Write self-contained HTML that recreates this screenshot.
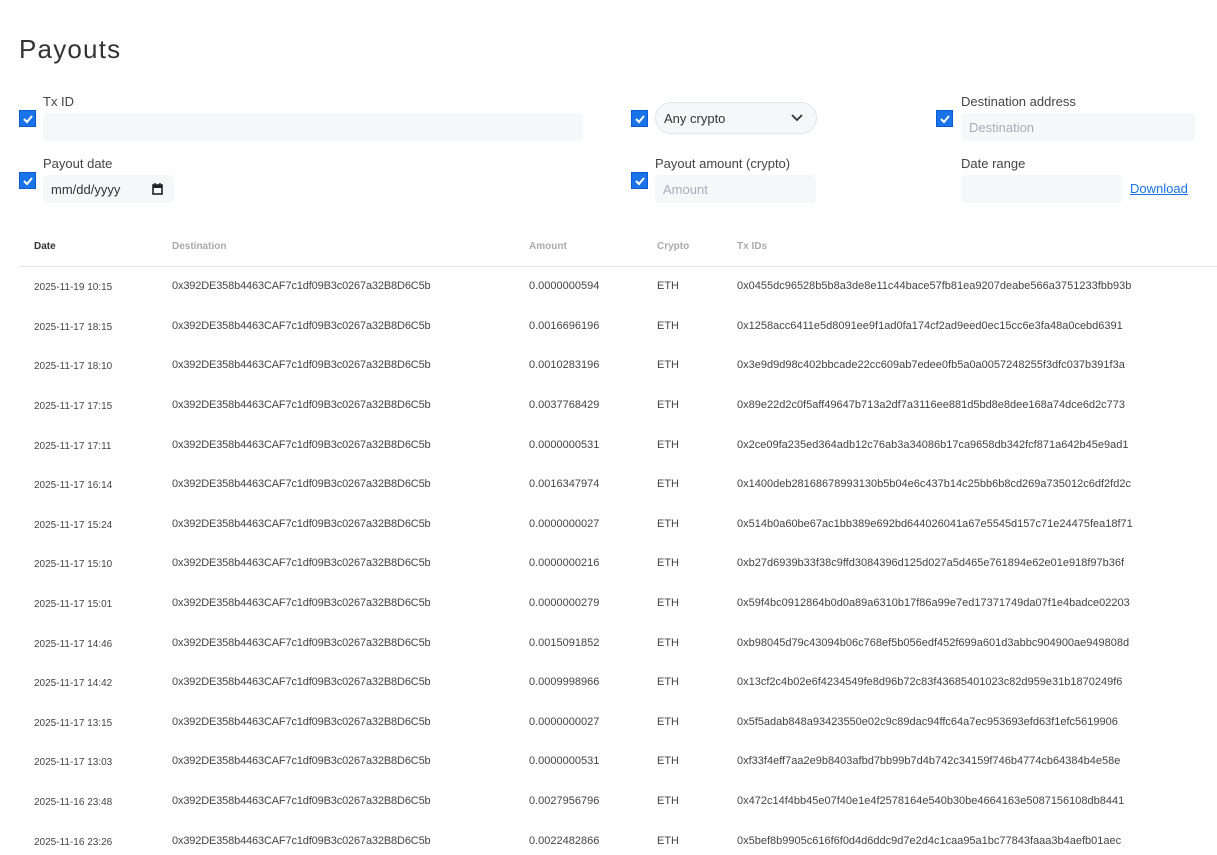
<!DOCTYPE html>
<html><head><meta charset="utf-8"><style>
*{margin:0;padding:0;box-sizing:border-box}
body{width:1217px;height:853px;overflow:hidden;background:#fff;font-family:"Liberation Sans",sans-serif;color:#333;position:relative}
.a{position:absolute}
h1{position:absolute;left:19px;top:34px;font-size:26px;font-weight:normal;color:#333;letter-spacing:1.2px}
.cb{position:absolute;width:17px;height:17px;background:#1a73e8;border:1px solid #0d5bd0}
.cb svg{position:absolute;left:2px;top:2px}
.lbl{position:absolute;font-size:13px;color:#444}
.inp{position:absolute;background:#f6f7f9;border-radius:4px;font-size:13px;color:#aab;padding-left:8px;display:flex;align-items:center}
.th{position:absolute;top:241px;font-size:10px;font-weight:bold;color:#aaa}
.row{position:absolute;left:0;width:1217px;height:20px;font-size:11px;color:#444}
.row span{position:absolute;top:0}
.row span:first-child{top:2px}
.row span:nth-child(2){letter-spacing:-0.15px}
</style></head><body>
<h1>Payouts</h1>

<div class="cb" style="left:19px;top:110px"><svg width="12" height="12" viewBox="0 0 12 12"><path d="M2 6l3 3 5-6" stroke="#fff" stroke-width="2" fill="none"/></svg></div>
<div class="lbl" style="left:43px;top:94px">Tx ID</div>
<div class="inp" style="left:43px;top:113px;width:540px;height:28px"></div>

<div class="cb" style="left:19px;top:172px"><svg width="12" height="12" viewBox="0 0 12 12"><path d="M2 6l3 3 5-6" stroke="#fff" stroke-width="2" fill="none"/></svg></div>
<div class="lbl" style="left:43px;top:156px">Payout date</div>
<div class="inp" style="left:43px;top:175px;width:131px;height:28px;color:#333;font-size:13px">mm/dd/yyyy<svg class="a" style="left:109px;top:7px" width="11" height="13" viewBox="0 0 11 13"><rect x="1" y="3" width="9" height="9" fill="none" stroke="#222" stroke-width="1.6"/><rect x="1" y="3" width="9" height="3" fill="#222"/><path d="M3 1v2M8 1v2" stroke="#222" stroke-width="1.5"/></svg></div>

<div class="cb" style="left:631px;top:110px"><svg width="12" height="12" viewBox="0 0 12 12"><path d="M2 6l3 3 5-6" stroke="#fff" stroke-width="2" fill="none"/></svg></div>
<div class="a" style="left:655px;top:102px;width:162px;height:32px;border:1px solid #e3e5e8;border-radius:16px;background:#f6f7f9;font-size:13px;color:#333;padding:8px 0 0 8px">Any crypto<svg class="a" style="left:135px;top:11px" width="12" height="8" viewBox="0 0 12 8"><path d="M1 1l5 5 5-5" stroke="#333" stroke-width="1.8" fill="none"/></svg></div>

<div class="cb" style="left:631px;top:172px"><svg width="12" height="12" viewBox="0 0 12 12"><path d="M2 6l3 3 5-6" stroke="#fff" stroke-width="2" fill="none"/></svg></div>
<div class="lbl" style="left:655px;top:156px">Payout amount (crypto)</div>
<div class="inp" style="left:655px;top:175px;width:161px;height:28px">Amount</div>

<div class="cb" style="left:936px;top:110px"><svg width="12" height="12" viewBox="0 0 12 12"><path d="M2 6l3 3 5-6" stroke="#fff" stroke-width="2" fill="none"/></svg></div>
<div class="lbl" style="left:961px;top:94px">Destination address</div>
<div class="inp" style="left:961px;top:113px;width:234px;height:28px">Destination</div>

<div class="lbl" style="left:961px;top:156px">Date range</div>
<div class="inp" style="left:961px;top:175px;width:161px;height:28px"></div>
<div class="a" style="left:1130px;top:181px;font-size:13px;color:#1a73e8;text-decoration:underline">Download</div>

<div class="th" style="left:34px;color:#333">Date</div>
<div class="th" style="left:172px">Destination</div>
<div class="th" style="left:529px">Amount</div>
<div class="th" style="left:657px">Crypto</div>
<div class="th" style="left:737px">Tx IDs</div>
<div class="a" style="left:19px;top:266px;width:1198px;height:1px;background:#e5e5e5"></div>

<div class="row" style="top:280px"><span style="left:34px;font-size:10px">2025-11-19 10:15</span><span style="left:172px">0x392DE358b4463CAF7c1df09B3c0267a32B8D6C5b</span><span style="left:529px">0.0000000594</span><span style="left:657px">ETH</span><span style="left:737px">0x0455dc96528b5b8a3de8e11c44bace57fb81ea9207deabe566a3751233fbb93b</span></div>
<div class="row" style="top:320px"><span style="left:34px;font-size:10px">2025-11-17 18:15</span><span style="left:172px">0x392DE358b4463CAF7c1df09B3c0267a32B8D6C5b</span><span style="left:529px">0.0016696196</span><span style="left:657px">ETH</span><span style="left:737px">0x1258acc6411e5d8091ee9f1ad0fa174cf2ad9eed0ec15cc6e3fa48a0cebd6391</span></div>
<div class="row" style="top:359px"><span style="left:34px;font-size:10px">2025-11-17 18:10</span><span style="left:172px">0x392DE358b4463CAF7c1df09B3c0267a32B8D6C5b</span><span style="left:529px">0.0010283196</span><span style="left:657px">ETH</span><span style="left:737px">0x3e9d9d98c402bbcade22cc609ab7edee0fb5a0a0057248255f3dfc037b391f3a</span></div>
<div class="row" style="top:399px"><span style="left:34px;font-size:10px">2025-11-17 17:15</span><span style="left:172px">0x392DE358b4463CAF7c1df09B3c0267a32B8D6C5b</span><span style="left:529px">0.0037768429</span><span style="left:657px">ETH</span><span style="left:737px">0x89e22d2c0f5aff49647b713a2df7a3116ee881d5bd8e8dee168a74dce6d2c773</span></div>
<div class="row" style="top:439px"><span style="left:34px;font-size:10px">2025-11-17 17:11</span><span style="left:172px">0x392DE358b4463CAF7c1df09B3c0267a32B8D6C5b</span><span style="left:529px">0.0000000531</span><span style="left:657px">ETH</span><span style="left:737px">0x2ce09fa235ed364adb12c76ab3a34086b17ca9658db342fcf871a642b45e9ad1</span></div>
<div class="row" style="top:478px"><span style="left:34px;font-size:10px">2025-11-17 16:14</span><span style="left:172px">0x392DE358b4463CAF7c1df09B3c0267a32B8D6C5b</span><span style="left:529px">0.0016347974</span><span style="left:657px">ETH</span><span style="left:737px">0x1400deb28168678993130b5b04e6c437b14c25bb6b8cd269a735012c6df2fd2c</span></div>
<div class="row" style="top:518px"><span style="left:34px;font-size:10px">2025-11-17 15:24</span><span style="left:172px">0x392DE358b4463CAF7c1df09B3c0267a32B8D6C5b</span><span style="left:529px">0.0000000027</span><span style="left:657px">ETH</span><span style="left:737px">0x514b0a60be67ac1bb389e692bd644026041a67e5545d157c71e24475fea18f71</span></div>
<div class="row" style="top:557px"><span style="left:34px;font-size:10px">2025-11-17 15:10</span><span style="left:172px">0x392DE358b4463CAF7c1df09B3c0267a32B8D6C5b</span><span style="left:529px">0.0000000216</span><span style="left:657px">ETH</span><span style="left:737px">0xb27d6939b33f38c9ffd3084396d125d027a5d465e761894e62e01e918f97b36f</span></div>
<div class="row" style="top:597px"><span style="left:34px;font-size:10px">2025-11-17 15:01</span><span style="left:172px">0x392DE358b4463CAF7c1df09B3c0267a32B8D6C5b</span><span style="left:529px">0.0000000279</span><span style="left:657px">ETH</span><span style="left:737px">0x59f4bc0912864b0d0a89a6310b17f86a99e7ed17371749da07f1e4badce02203</span></div>
<div class="row" style="top:637px"><span style="left:34px;font-size:10px">2025-11-17 14:46</span><span style="left:172px">0x392DE358b4463CAF7c1df09B3c0267a32B8D6C5b</span><span style="left:529px">0.0015091852</span><span style="left:657px">ETH</span><span style="left:737px">0xb98045d79c43094b06c768ef5b056edf452f699a601d3abbc904900ae949808d</span></div>
<div class="row" style="top:676px"><span style="left:34px;font-size:10px">2025-11-17 14:42</span><span style="left:172px">0x392DE358b4463CAF7c1df09B3c0267a32B8D6C5b</span><span style="left:529px">0.0009998966</span><span style="left:657px">ETH</span><span style="left:737px">0x13cf2c4b02e6f4234549fe8d96b72c83f43685401023c82d959e31b1870249f6</span></div>
<div class="row" style="top:716px"><span style="left:34px;font-size:10px">2025-11-17 13:15</span><span style="left:172px">0x392DE358b4463CAF7c1df09B3c0267a32B8D6C5b</span><span style="left:529px">0.0000000027</span><span style="left:657px">ETH</span><span style="left:737px">0x5f5adab848a93423550e02c9c89dac94ffc64a7ec953693efd63f1efc5619906</span></div>
<div class="row" style="top:755px"><span style="left:34px;font-size:10px">2025-11-17 13:03</span><span style="left:172px">0x392DE358b4463CAF7c1df09B3c0267a32B8D6C5b</span><span style="left:529px">0.0000000531</span><span style="left:657px">ETH</span><span style="left:737px">0xf33f4eff7aa2e9b8403afbd7bb99b7d4b742c34159f746b4774cb64384b4e58e</span></div>
<div class="row" style="top:795px"><span style="left:34px;font-size:10px">2025-11-16 23:48</span><span style="left:172px">0x392DE358b4463CAF7c1df09B3c0267a32B8D6C5b</span><span style="left:529px">0.0027956796</span><span style="left:657px">ETH</span><span style="left:737px">0x472c14f4bb45e07f40e1e4f2578164e540b30be4664163e5087156108db8441</span></div>
<div class="row" style="top:835px"><span style="left:34px;font-size:10px">2025-11-16 23:26</span><span style="left:172px">0x392DE358b4463CAF7c1df09B3c0267a32B8D6C5b</span><span style="left:529px">0.0022482866</span><span style="left:657px">ETH</span><span style="left:737px">0x5bef8b9905c616f6f0d4d6ddc9d7e2d4c1caa95a1bc77843faaa3b4aefb01aec</span></div>
</body></html>
